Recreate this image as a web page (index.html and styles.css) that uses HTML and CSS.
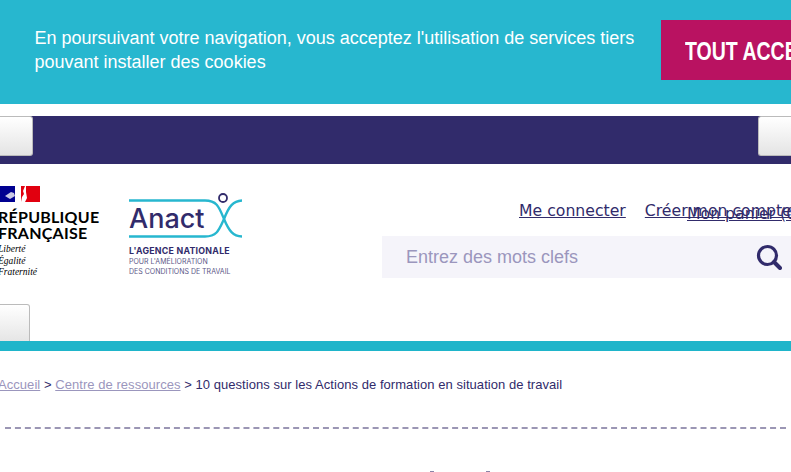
FILE: index.html
```html
<!DOCTYPE html>
<html lang="fr">
  <head>
    <meta charset="UTF-8" />
    <meta name="viewport" content="width=device-width, initial-scale=1.0" />
    <title>10 questions sur les Actions de formation en situation de travail</title>
    <link rel="stylesheet" href="styles.css">
  </head>
  <body>
    <div class="cookie-banner">
      <p class="cookie-text">En poursuivant votre navigation, vous acceptez l'utilisation de services tiers pouvant installer des cookies</p>
      <button class="cookie-button"><span class="cookie-label">TOUT ACCEPTER</span></button>
    </div>

    <div class="nav-bar">
      <button class="nav-button nav-button-left"></button>
      <button class="nav-button nav-button-right"></button>
    </div>

    <header class="site-header">
      <div class="logo-row">
        <div class="logo-rf">
          <svg class="marianne" width="40" height="16" viewBox="0 0 40 16">
            <rect x="0" y="0" width="15" height="16" fill="#000091" />
            <rect x="21" y="0" width="19" height="16" fill="#e1000f" />
            <path d="M5 10 L11 6 L14 7 L15 10 L10 13 Z" fill="#c9c9e6" />
            <path d="M21 16 L22 11 L24 8 L23 5 L25 0 L26 0 L26 6 L27 12 L25 16 Z" fill="#fff" />
          </svg>
          <div class="rf-name">RÉPUBLIQUE<br>FRANÇAISE</div>
          <div class="rf-motto">Liberté<br>Égalité<br>Fraternité</div>
        </div>

        <div class="logo-anact">
          <svg class="anact-mark" width="114" height="46" viewBox="0 0 114 46">
            <path d="M0 6.5 H76 C88 6.5 90 13 95 25 C100 37 104 42 113 42.5" fill="none" stroke="#27b7cf" stroke-width="2.4" />
            <path d="M0 42.5 H76 C88 42.5 90 36 95 25 C100 12 104 7 113 6.5" fill="none" stroke="#27b7cf" stroke-width="2.4" />
            <circle cx="94" cy="4" r="4" fill="#fff" stroke="#312b6b" stroke-width="1.8" />
            <text class="anact-word" x="0" y="34">Anact</text>
          </svg>
          <div class="anact-title">L'AGENCE NATIONALE</div>
          <div class="anact-sub">POUR L'AMÉLIORATION<br>DES CONDITIONS DE TRAVAIL</div>
        </div>

        <div class="header-right">
          <div class="account-links">
            <a href="#">Me connecter</a>
            <a href="#">Créer mon compte</a>
            <a class="cart-link" href="#">Mon panier (0)</a>
          </div>
          <div class="search-box">
            <span class="search-text">Entrez des mots clefs</span>
            <svg class="search-icon" width="26" height="26" viewBox="0 0 26 26">
              <circle cx="11.5" cy="11.5" r="9" fill="none" stroke="#312b6b" stroke-width="3.2" />
              <path d="M18 18 L24 24" stroke="#312b6b" stroke-width="4" stroke-linecap="round" />
            </svg>
          </div>
        </div>
      </div>
      <button class="menu-button"></button>
    </header>

    <div class="teal-stripe"></div>

    <div class="breadcrumb">
      <a href="#">Accueil</a> &gt; <a href="#">Centre de ressources</a> &gt; 10 questions sur les Actions de formation en situation de travail
    </div>
    <div class="dashed-line"></div>
    <div class="title-tips">
      <span></span>
      <span></span>
    </div>
  </body>
</html>
```

FILE: styles.css
```css
html, body {
  height: 472px;
  overflow: hidden;
}
body {
  font-family: "Liberation Sans", Arial, sans-serif;
  margin: 0;
  background-color: #fff;
  color: #312b6b;
}
.cookie-banner {
  height: 104px;
  background-color: #27b7cf;
  display: flex;
  padding-top: 20px;
  box-sizing: border-box;
  overflow: hidden;
}
.cookie-text {
  flex: none;
  width: 616px;
  margin: 6px 0 0 34.5px;
  font-size: 18px;
  line-height: 24px;
  color: #fff;
}
.cookie-button {
  flex: none;
  margin-left: 10.5px;
  width: 200px;
  height: 60px;
  padding: 3px 0 0 24px;
  border: none;
  background-color: #b91261;
  color: #fff;
  font-family: "Liberation Sans", sans-serif;
  font-size: 26px;
  font-weight: bold;
  text-align: left;
  white-space: nowrap;
}
.cookie-label {
  display: inline-block;
  transform: scaleX(0.75);
  transform-origin: left center;
}
.nav-bar {
  margin-top: 12px;
  height: 48px;
  background-color: #312b6b;
  display: flex;
  justify-content: space-between;
}
.nav-button {
  height: 40px;
  width: 33px;
  padding: 0;
  border: 1px solid #bbb;
  background: linear-gradient(#fff, #e4e4e4);
}
.nav-button-left {
  border-left: none;
  border-radius: 0 3px 3px 0;
}
.nav-button-right {
  border-right: none;
  border-radius: 3px 0 0 3px;
}
.site-header {
  height: 177px;
  overflow: hidden;
}
.logo-row {
  display: flex;
  height: 140px;
}
.logo-rf {
  flex: none;
  width: 126px;
  padding-top: 22px;
  color: #000;
}
.marianne {
  display: block;
}
.rf-name {
  margin: 7px 0 0 -2px;
  font-family: "Lato", sans-serif;
  font-size: 16px;
  line-height: 16px;
  font-weight: 700;
  letter-spacing: 0.25px;
  white-space: nowrap;
}
.rf-motto {
  margin: 3px 0 0 -2px;
  font-family: "Liberation Serif", serif;
  font-style: italic;
  font-size: 9.5px;
  line-height: 11.5px;
}
.logo-anact {
  flex: none;
  width: 253px;
  padding-top: 30px;
  margin-left: 3px;
}
.anact-mark {
  display: block;
  overflow: visible;
}
.anact-word {
  font-family: "Inter", sans-serif;
  font-size: 27px;
  font-weight: 500;
  fill: #312b6b;
}
.anact-title {
  margin-top: 5px;
  font-family: "Inter", sans-serif;
  font-size: 8.8px;
  line-height: 11px;
  font-weight: 700;
  letter-spacing: 0.25px;
  white-space: nowrap;
}
.anact-sub {
  margin-top: 1px;
  font-family: "Inter", sans-serif;
  font-size: 7px;
  line-height: 10px;
  color: #5c5888;
  white-space: nowrap;
}
.header-right {
  flex: none;
  width: 409px;
}
.account-links {
  height: 72px;
  padding: 37px 0 0 137px;
  box-sizing: border-box;
  position: relative;
  font-family: "DejaVu Sans", sans-serif;
  font-size: 15.7px;
  white-space: nowrap;
}
.account-links a {
  color: #312b6b;
  margin-right: 14px;
}
.account-links .cart-link {
  position: absolute;
  left: 305px;
  top: 40px;
  margin: 0;
}
.search-box {
  height: 42px;
  background-color: #f5f4fa;
  display: flex;
  align-items: center;
  justify-content: space-between;
  padding: 0 9px 0 24px;
}
.search-text {
  font-size: 18px;
  color: #9b96bd;
}
.search-icon {
  flex: none;
}
.menu-button {
  display: block;
  width: 30px;
  height: 40px;
  padding: 0;
  border: 1px solid #bbb;
  border-left: none;
  border-radius: 0 3px 0 0;
  background: linear-gradient(#fff, #e4e4e4);
}
.teal-stripe {
  height: 10px;
  background-color: #1fb5ca;
}
.breadcrumb {
  margin-top: 26px;
  margin-left: -2px;
  font-size: 13px;
  line-height: 15px;
  letter-spacing: 0.05px;
  color: #312b6b;
  white-space: nowrap;
}
.breadcrumb a {
  color: #9b96bd;
}
.dashed-line {
  margin: 35px 5px 0;
  border-top: 2px dashed #9b96b4;
}
.title-tips {
  display: flex;
  gap: 52px;
  margin-top: 42px;
  padding-left: 430px;
}
.title-tips span {
  width: 4px;
  height: 1px;
  background-color: #8a84a8;
}
```
